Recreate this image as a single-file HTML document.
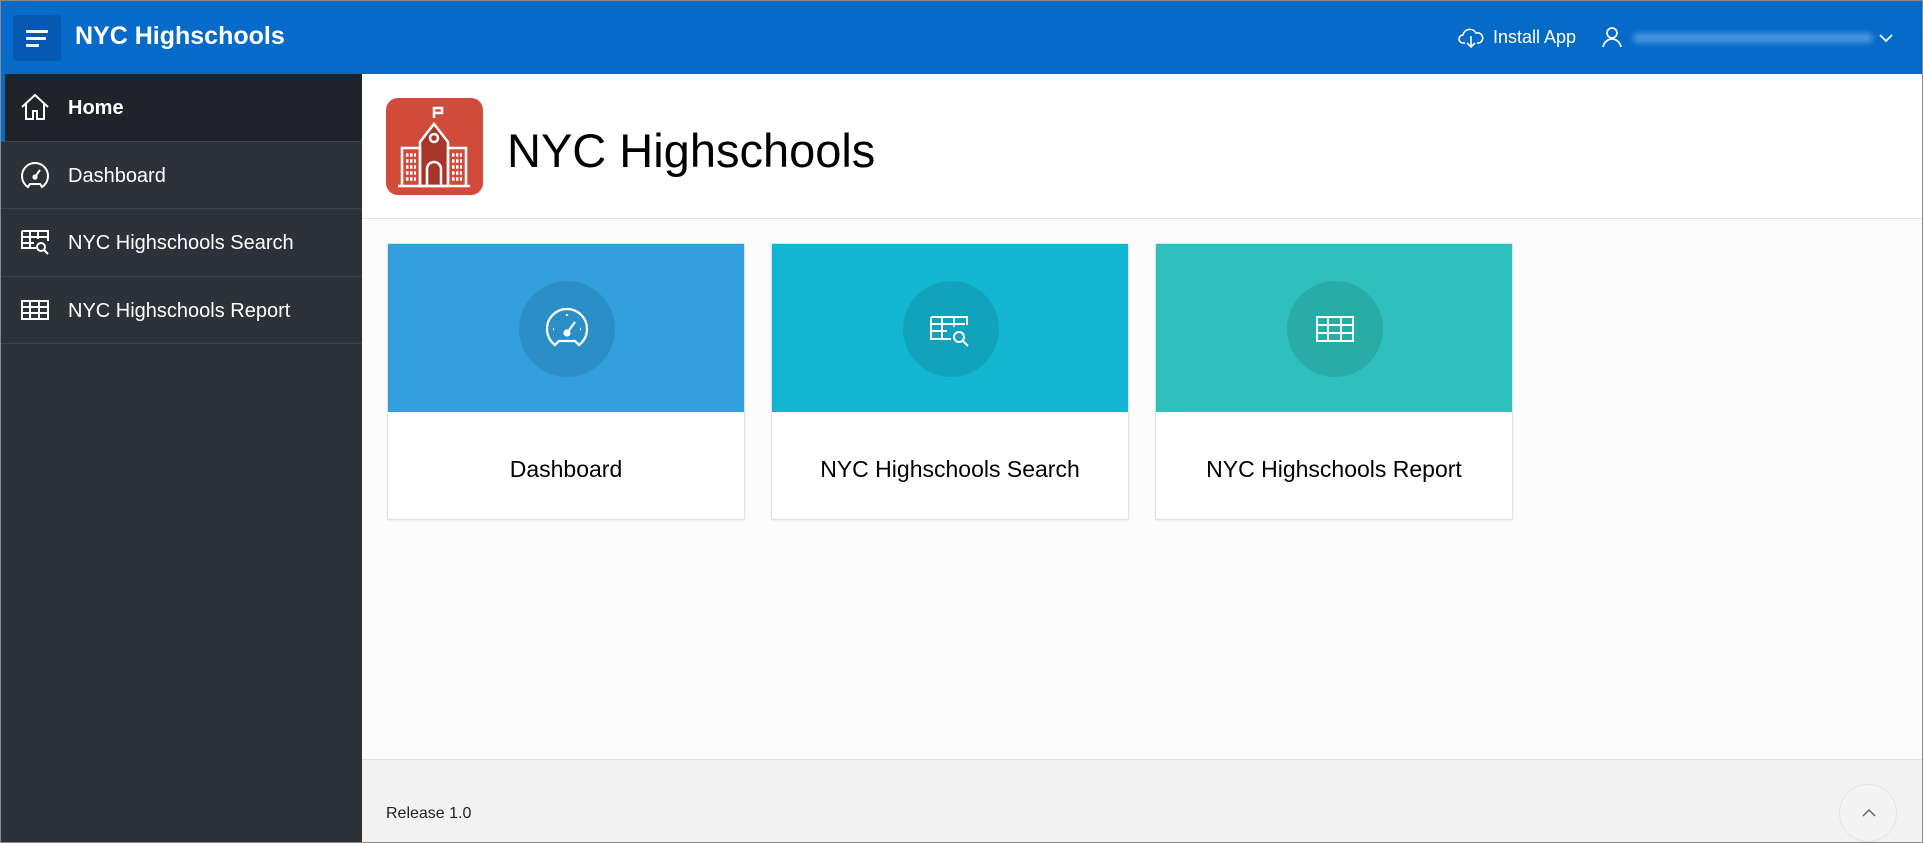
<!DOCTYPE html>
<html><head><meta charset="utf-8">
<style>
*{box-sizing:border-box;margin:0;padding:0}
body{width:1923px;height:843px;overflow:hidden;font-family:"Liberation Sans",sans-serif;background:#fcfcfc;position:relative}
.frame{position:absolute;inset:0;border:1px solid #8a8a8a;z-index:10;pointer-events:none}
.hdr{position:absolute;left:0;top:0;width:1923px;height:74px;background:#066ac9;color:#fff}
.ham{position:absolute;left:13px;top:15px;width:48px;height:46px;background:#0559b0;border-radius:3px}
.ham i{position:absolute;left:13px;height:3px;background:#fff;border-radius:1px}
.htitle{position:absolute;left:75px;top:22px;font-size:25px;font-weight:bold}
.side{position:absolute;left:0;top:74px;width:362px;height:769px;background:#2d3239}
.item{position:relative;height:67.5px;border-bottom:1px solid #3f444b;color:#fff;font-size:20px;display:flex;align-items:center}
.item svg{position:absolute;left:20px}
.item span{position:absolute;left:68px;top:23px}
.item.act{background:#202327;border-left:5px solid #066ac9}
.item.act svg{left:15px}.item.act span{left:63px}
.main{position:absolute;left:362px;top:74px;width:1561px;height:685px;background:#fcfcfc}
.titlebar{position:absolute;left:0;top:0;width:1561px;height:145px;background:#fff;border-bottom:1px solid #e3e3e3}
.logo{position:absolute;left:24px;top:24px;width:97px;height:97px;background:#d14b3a;border-radius:12px}
.ptitle{position:absolute;left:145px;top:49px;font-size:47px;color:#000}
.card{position:absolute;top:169px;width:358px;height:277px;background:#fff;border:1px solid #e2e2e2;border-radius:2px;box-shadow:0 1px 2px rgba(0,0,0,.06)}
.card .top{height:168px;position:relative}
.card .circ{position:absolute;left:131px;top:37px;width:96px;height:96px;border-radius:50%;background:rgba(0,0,0,.1)}
.card .circ svg{position:absolute;left:24px;top:24px}
.card .lbl{text-align:center;font-size:23px;color:#000;margin-top:44px}
.foot{position:absolute;left:362px;top:759px;width:1561px;height:84px;background:#f2f2f2;border-top:1px solid #e3e3e3}
.rel{position:absolute;left:24px;top:45px;font-size:16px;color:#222}
.up{position:absolute;left:1477px;top:24px;width:58px;height:58px;border-radius:50%;background:#f4f4f4;border:1px solid #e4e4e4}
</style></head><body>
<div class="frame"></div>
<div class="hdr">
 <div class="ham"><i style="top:15px;width:22px"></i><i style="top:22px;width:20px"></i><i style="top:29px;width:13px"></i></div>
 <div class="htitle">NYC Highschools</div>
 <svg style="position:absolute;left:1458px;top:27px" width="26" height="22" viewBox="0 0 26 22" fill="none" stroke="#fff" stroke-width="1.6"><path d="M7 16H5a4 4 0 0 1 0-8 7 7 0 0 1 13-2 5 5 0 0 1 3 10h-2"/><path d="M13 9v11M9 16l4 4 4-4"/></svg>
 <div style="position:absolute;left:1493px;top:27px;font-size:18px">Install App</div>
 <svg style="position:absolute;left:1601px;top:26px" width="22" height="22" viewBox="0 0 22 22" fill="none" stroke="#fff" stroke-width="1.7"><circle cx="11" cy="7" r="5"/><path d="M2 21c1-5 5-8 9-8s8 3 9 8"/></svg>
 <div style="position:absolute;left:1633px;top:33px;width:240px;height:10px;background:#4b96dc;border-radius:5px;filter:blur(3px)"></div>
 <svg style="position:absolute;left:1878px;top:33px" width="16" height="10" viewBox="0 0 16 10" fill="none" stroke="#fff" stroke-width="1.8"><path d="M2 2l6 6 6-6"/></svg>
</div>
<div class="side">
 <div class="item act"><svg width="30" height="28" viewBox="0 0 30 28" fill="none" stroke="#fff" stroke-width="2"><path d="M2 14L15 2l13 12M6 11v15h7v-8h4v8h7V11"/></svg><span style="font-weight:bold">Home</span></div>
 <div class="item"><svg width="30" height="30" viewBox="0 0 30 30" fill="none" stroke="#fff" stroke-width="2"><path d="M8 27a13 13 0 1 1 14 0l-2-3h-10z"/><path d="M15 17l5-7"/><circle cx="15" cy="17" r="1.6" fill="#fff"/></svg><span>Dashboard</span></div>
 <div class="item"><svg width="30" height="28" viewBox="0 0 30 28" fill="none" stroke="#fff" stroke-width="2"><path d="M2 3h26v10M2 3v17h14M2 9h26M2 15h12M10 3v17M18 3v8"/><circle cx="21" cy="19" r="4"/><path d="M24 22l4 4"/></svg><span>NYC Highschools Search</span></div>
 <div class="item"><svg width="30" height="24" viewBox="0 0 30 24" fill="none" stroke="#fff" stroke-width="2"><rect x="2" y="3" width="26" height="18"/><path d="M2 9h26M2 15h26M10 3v18M19 3v18"/></svg><span>NYC Highschools Report</span></div>
</div>
<div class="main">
 <div class="titlebar">
  <div class="logo"><svg width="97" height="97" viewBox="0 0 97 97" fill="none" stroke="#fff" stroke-width="2.5">
   <path d="M48 20v-10h8v5h-8" /><path d="M34 44l14-18 14 18v44H34z" fill="#a83628"/><circle cx="48" cy="40" r="4"/>
   <path d="M16 50h18v38H16zM62 50h18v38H62zM12 88h72"/><path d="M41 87V71a7 7 0 0 1 14 0v16"/>
   <path d="M20 57h10M20 63h10M20 69h10M20 75h10M20 81h10M66 57h10M66 63h10M66 69h10M66 75h10M66 81h10" stroke-width="3.5" stroke-dasharray="2.5 1.5"/></svg></div>
  <div class="ptitle">NYC Highschools</div>
 </div>
 <div class="card" style="left:25px"><div class="top" style="background:#329fdd"><div class="circ"><svg width="48" height="48" viewBox="0 0 48 48" fill="none" stroke="#fff" stroke-width="2.2"><path d="M12 40a20 20 0 1 1 24 0l-4-4H16z"/><path d="M24 28l8-11"/><circle cx="24" cy="28" r="2.5" fill="#fff"/><path d="M24 9v2M10 24h1M37 24h1"/></svg></div></div><div class="lbl">Dashboard</div></div>
 <div class="card" style="left:409px"><div class="top" style="background:#13b6d1"><div class="circ"><svg width="48" height="48" viewBox="0 0 48 48" fill="none" stroke="#fff" stroke-width="2"><path d="M4 12h36v8M4 12v22h20M4 19h34M4 26h16M15 12v22M27 12v10"/><circle cx="32" cy="32" r="5"/><path d="M36 36l5 5"/></svg></div></div><div class="lbl">NYC Highschools Search</div></div>
 <div class="card" style="left:793px"><div class="top" style="background:#2ebfbc"><div class="circ"><svg width="48" height="48" viewBox="0 0 48 48" fill="none" stroke="#fff" stroke-width="2"><rect x="6" y="12" width="36" height="24"/><path d="M6 20h36M6 28h36M17 12v24M30 12v24"/></svg></div></div><div class="lbl">NYC Highschools Report</div></div>
</div>
<div class="foot"><div class="rel">Release 1.0</div>
 <div class="up"><svg style="position:absolute;left:21px;top:23px" width="16" height="10" viewBox="0 0 16 10" fill="none" stroke="#666" stroke-width="1.5"><path d="M2 8l6-6 6 6"/></svg></div></div>
</body></html>
